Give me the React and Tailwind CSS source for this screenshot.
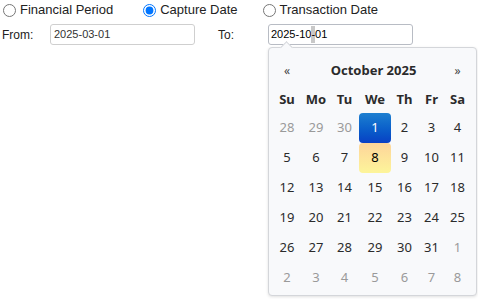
import { useState } from 'react'

const weekDays = ['Su', 'Mo', 'Tu', 'We', 'Th', 'Fr', 'Sa']
const colWidths = ['w-[30px]', 'w-[28px]', 'w-[29px]', 'w-[32px]', 'w-[27px]', 'w-[27px]', 'w-[25px]']

// 6 weeks shown for October 2025
const weeks = [
  [[28, 'old'], [29, 'old'], [30, 'old'], [1, 'active'], [2], [3], [4]],
  [[5], [6], [7], [8, 'today'], [9], [10], [11]],
  [[12], [13], [14], [15], [16], [17], [18]],
  [[19], [20], [21], [22], [23], [24], [25]],
  [[26], [27], [28], [29], [30], [31], [1, 'old']],
  [[2, 'old'], [3, 'old'], [4, 'old'], [5, 'old'], [6, 'old'], [7, 'old'], [8, 'old']],
]

function dayClass(kind) {
  if (kind === 'active') return 'bg-gradient-to-b from-[#1e7fd0] to-[#0b3fc4] text-white rounded-[4px]'
  if (kind === 'today') return 'bg-gradient-to-b from-[#fdd49a] to-[#fdf59a] text-black rounded-[4px]'
  if (kind === 'old') return 'text-[#9a9a9a]'
  return 'text-[#2b2b2b]'
}

function DatePicker() {
  return (
    <div className="absolute left-[268px] top-[47px] w-[209px] h-[249px] bg-[#f8f9fb] border border-[#d4d6da] rounded-[4px] shadow-[0_1px_3px_rgba(0,0,0,0.12)] pl-[3px] pt-[7px] font-['Noto_Sans',sans-serif] text-[13px]">
      <div className="absolute -top-[5px] left-[13px] w-[9px] h-[9px] rotate-45 bg-[#f8f9fb] border-t border-l border-[#d4d6da]"></div>
      <div className="flex h-[31px] items-center">
        <div className={`${colWidths[0]} text-center text-[#444] text-[12px]`}>«</div>
        <div className="w-[143px] text-center font-bold text-[#2b2b2b]">October 2025</div>
        <div className={`${colWidths[6]} text-center text-[#444] text-[12px]`}>»</div>
      </div>
      <div className="flex h-[27px] items-center">
        {weekDays.map((d, i) => (
          <div key={d} className={`${colWidths[i]} text-center font-bold text-[#2b2b2b]`}>{d}</div>
        ))}
      </div>
      {weeks.map((w, r) => (
        <div key={r} className="flex h-[30px]">
          {w.map(([n, kind], i) => (
            <div key={i} className={`${colWidths[i]} flex items-center justify-center ${dayClass(kind)}`}>{n}</div>
          ))}
        </div>
      ))}
    </div>
  )
}

export default function App() {
  const [mode, setMode] = useState('capture')

  return (
    <div className="relative w-[478px] h-[299px] bg-white font-['Liberation_Sans',Arial,sans-serif] text-[13px] text-[#222]">
      <div className="flex items-center h-[19px] pt-[1px]">
        <label className="flex items-center ml-[3px]">
          <input type="radio" name="mode" checked={mode === 'financial'} onChange={() => setMode('financial')} className="m-0 w-[13px] h-[13px]" />
          <span className="ml-[4px]">Financial Period</span>
        </label>
        <label className="flex items-center ml-[30px]">
          <input type="radio" name="mode" checked={mode === 'capture'} onChange={() => setMode('capture')} className="m-0 w-[13px] h-[13px]" />
          <span className="ml-[4px]">Capture Date</span>
        </label>
        <label className="flex items-center ml-[25px]">
          <input type="radio" name="mode" checked={mode === 'transaction'} onChange={() => setMode('transaction')} className="m-0 w-[13px] h-[13px]" />
          <span className="ml-[4px]">Transaction Date</span>
        </label>
      </div>

      <div className="flex items-center mt-[5px] h-[21px]">
        <span className="w-[50px] pl-[2px] text-[12px]">From:</span>
        <div className="w-[145px] h-[21px] border border-[#cfcfcf] rounded-[3px] pl-[3px] flex items-center text-[11px] text-[#333]">2025-03-01</div>
        <span className="ml-[23px] w-[50px] text-[12px]">To:</span>
        <div className="w-[145px] h-[21px] border border-[#b8bcc4] rounded-[3px] pl-[2px] flex items-center text-[11px] text-black">
          2025-10<span className="bg-[#c8c8c8]">-</span>01
        </div>
      </div>

      <DatePicker />
    </div>
  )
}
